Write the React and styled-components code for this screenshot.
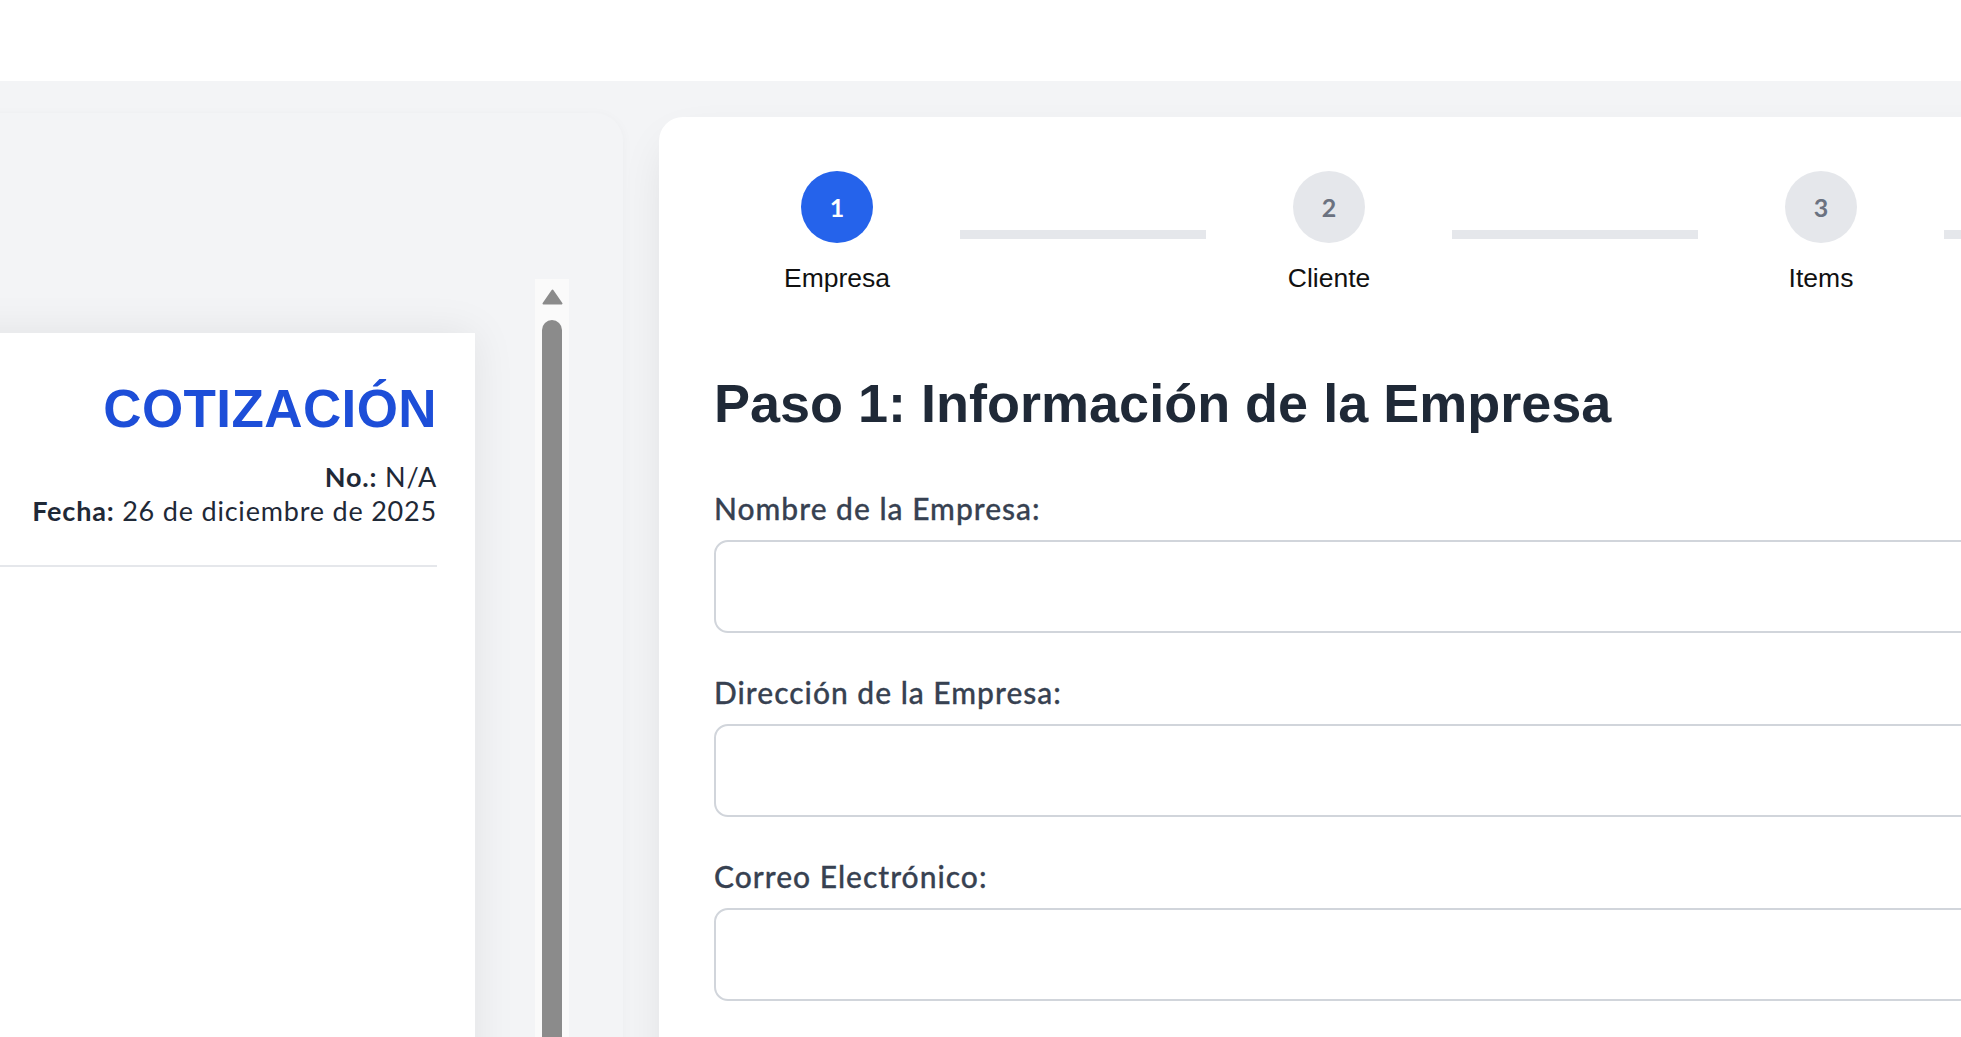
import React from 'react';
import styled, { createGlobalStyle } from 'styled-components';

const bodyFont = `"Lato", "Noto Sans", sans-serif`;
const arial = `"Liberation Sans", Arial, sans-serif`;

const GlobalStyle = createGlobalStyle`
  html, body {
    margin: 0;
    padding: 0;
  }
  body {
    background: #f3f4f6;
    overflow: hidden;
    font-family: ${bodyFont};
  }
  *, *::before, *::after {
    box-sizing: border-box;
  }
`;

const Page = styled.div`
  width: 1961px;
  height: 1037px;
  overflow: hidden;
  display: flex;
  flex-direction: column;
  background: #f3f4f6;
`;

const TopBar = styled.header`
  height: 81px;
  flex-shrink: 0;
  background: #ffffff;
`;

const Main = styled.main`
  flex: 1;
  min-height: 0;
  display: flex;
  align-items: flex-start;
  gap: 36px;
  padding-top: 32px;
`;

/* ---------- preview column ---------- */

const PreviewPanel = styled.section`
  flex-shrink: 0;
  width: 1000px;
  height: 1150px;
  margin-left: -377px;
  padding: 166px 54px 0 0;
  display: flex;
  justify-content: flex-end;
  background: #f3f4f6;
  border-radius: 28px;
  box-shadow: 0 2px 12px rgba(0, 0, 0, 0.035);
`;

const PreviewScroller = styled.div`
  display: flex;
  align-items: flex-start;
  gap: 60px;
`;

const Paper = styled.article`
  width: 800px;
  min-height: 1200px;
  margin-top: 54px;
  padding: 46px 38px 0 40px;
  background: #ffffff;
  box-shadow: 0 0 40px rgba(0, 0, 0, 0.08);
`;

const PaperHeader = styled.div`
  text-align: right;
  padding-bottom: 37px;
  border-bottom: 2px solid #e5e7eb;
`;

const QuoteTitle = styled.h1`
  margin: 0 0 21px;
  font-family: ${arial};
  font-size: 53px;
  line-height: 60px;
  letter-spacing: 0.4px;
  font-weight: 700;
  color: #1d4ed8;
`;

const MetaLine = styled.p`
  margin: 0;
  font-family: ${bodyFont};
  font-size: 27px;
  line-height: 34px;
  letter-spacing: 0.8px;
  color: #1f2937;

  strong {
    font-weight: 700;
  }
`;

const ScrollTrack = styled.div`
  align-self: stretch;
  width: 34px;
  padding-top: 10px;
  display: flex;
  flex-direction: column;
  align-items: center;
  background: #fafafa;
`;

const ScrollThumb = styled.div`
  flex: 1;
  width: 20px;
  margin-top: 15px;
  border-radius: 10px 10px 0 0;
  background: #8b8b8b;
`;

/* ---------- form column ---------- */

const FormCard = styled.section`
  flex-shrink: 0;
  width: 1500px;
  min-height: 1150px;
  margin-top: 4px;
  padding: 54px 55px;
  background: #ffffff;
  border-radius: 24px;
  box-shadow: 0 20px 50px -12px rgba(0, 0, 0, 0.12);
`;

const Stepper = styled.ol`
  margin: 0;
  padding: 0;
  list-style: none;
  display: flex;
  align-items: flex-start;
`;

const Step = styled.li`
  width: 246px;
  flex-shrink: 0;
  display: flex;
  flex-direction: column;
  align-items: center;
`;

const StepCircle = styled.span`
  width: 72px;
  height: 72px;
  border-radius: 50%;
  display: flex;
  align-items: center;
  justify-content: center;
  font-family: ${bodyFont};
  font-size: 25px;
  font-weight: 700;
  background: ${(p) => (p.$active ? '#2563eb' : '#e5e7eb')};
  color: ${(p) => (p.$active ? '#ffffff' : '#6b7280')};
`;

const StepLabel = styled.span`
  margin-top: 20px;
  font-family: ${arial};
  font-size: 26.5px;
  line-height: 30px;
  color: #111111;
`;

const Connector = styled.li`
  width: 246px;
  height: 9px;
  flex-shrink: 0;
  margin-top: 59px;
  background: #e5e7eb;
`;

const StepTitle = styled.h2`
  margin: 78px 0 0;
  font-family: ${arial};
  font-size: 54px;
  line-height: 64px;
  font-weight: 700;
  color: #1f2937;
`;

const Form = styled.form`
  margin-top: 55px;
  display: flex;
  flex-direction: column;
  gap: 41px;
`;

const Field = styled.div`
  display: flex;
  flex-direction: column;
`;

const Label = styled.label`
  margin-bottom: 14px;
  font-family: ${bodyFont};
  font-size: 30px;
  line-height: 36px;
  letter-spacing: 1px;
  font-weight: 500;
  color: #374151;
  -webkit-text-stroke: 0.3px #374151;
`;

const Input = styled.input`
  width: 100%;
  height: 93px;
  padding: 0 24px;
  border: 2px solid #d1d5db;
  border-radius: 14px;
  background: #ffffff;
  font-family: ${bodyFont};
  font-size: 28px;
  color: #1f2937;
  outline: none;
`;

// the stepper continues past the right edge of the window
const steps = ['Empresa', 'Cliente', 'Items'];

const fields = [
  { id: 'companyName', label: 'Nombre de la Empresa:', type: 'text' },
  { id: 'companyAddress', label: 'Dirección de la Empresa:', type: 'text' },
  { id: 'companyEmail', label: 'Correo Electrónico:', type: 'email' },
];

const ArrowUp = () => (
  <svg width="21" height="16" viewBox="0 0 21 16" aria-hidden="true">
    <path d="M10.5 1.5 L19.5 14.5 L1.5 14.5 Z" fill="#8b8b8b" stroke="#8b8b8b" strokeWidth="2" strokeLinejoin="round" />
  </svg>
);

const App = () => {
  return (
    <Page>
      <GlobalStyle />
      <TopBar />
      <Main>
        <PreviewPanel>
          <PreviewScroller>
            <Paper>
              <PaperHeader>
                <QuoteTitle>COTIZACIÓN</QuoteTitle>
                <MetaLine>
                  <strong>No.:</strong> N/A
                </MetaLine>
                <MetaLine>
                  <strong>Fecha:</strong> 26 de diciembre de 2025
                </MetaLine>
              </PaperHeader>
            </Paper>
            <ScrollTrack>
              <ArrowUp />
              <ScrollThumb />
            </ScrollTrack>
          </PreviewScroller>
        </PreviewPanel>

        <FormCard>
          <Stepper>
            {steps.map((name, i) => (
              <React.Fragment key={name}>
                <Step>
                  <StepCircle $active={i === 0}>{i + 1}</StepCircle>
                  <StepLabel>{name}</StepLabel>
                </Step>
                <Connector aria-hidden="true" />
              </React.Fragment>
            ))}
          </Stepper>

          <StepTitle>Paso 1: Información de la Empresa</StepTitle>

          <Form onSubmit={(e) => e.preventDefault()}>
            {fields.map((f) => (
              <Field key={f.id}>
                <Label htmlFor={f.id}>{f.label}</Label>
                <Input id={f.id} type={f.type} />
              </Field>
            ))}
          </Form>
        </FormCard>
      </Main>
    </Page>
  );
};

export default App;
